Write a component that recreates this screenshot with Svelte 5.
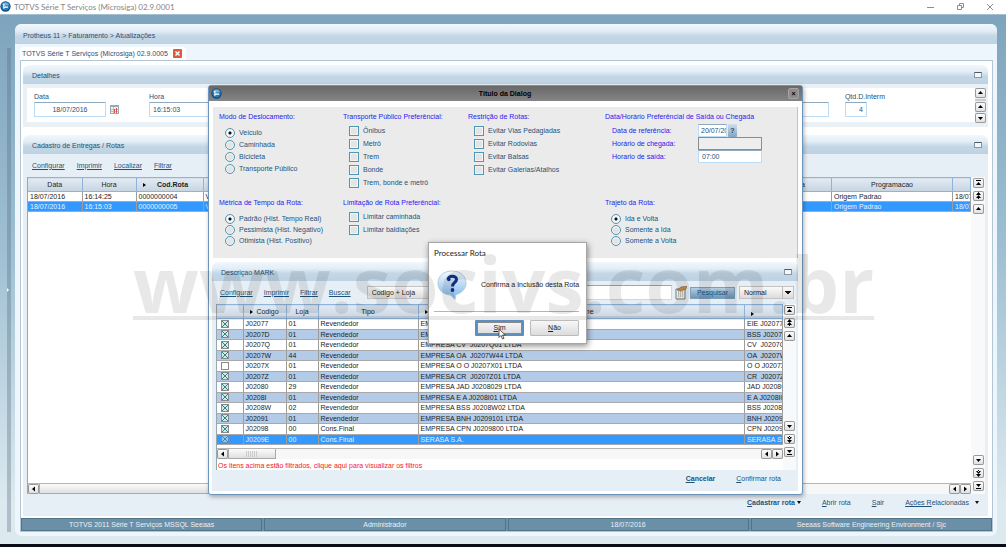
<script>
    let mode = $state("Veículo");
    let metric = $state("Padrão (Hist. Tempo Real)");
    let path = $state("Ida e Volta");
    let selected = $state(11);

    const modes = ["Veículo", "Caminhada", "Bicicleta", "Transporte Público"];
    const metrics = [
        "Padrão (Hist. Tempo Real)",
        "Pessimista (Hist. Negativo)",
        "Otimista (Hist. Positivo)",
    ];
    const paths = ["Ida e Volta", "Somente a Ida", "Somente a Volta"];
    const transports = ["Ônibus", "Metrô", "Trem", "Bonde", "Trem, bonde e metrô"];
    const restrictions = [
        "Evitar Vias Pedagiadas",
        "Evitar Rodovias",
        "Evitar Balsas",
        "Evitar Galerias/Atalhos",
    ];
    const limits = ["Limitar caminhada", "Limitar baldiações"];

    const routes = [
        { date: "18/07/2016", time: "16:14:25", code: "0000000004" },
        { date: "18/07/2016", time: "16:15:03", code: "0000000005" },
    ];

    let clients = $state([
        { on: true, code: "J02077", store: "01", type: "Revendedor", name: "EMPRESA EIE J0207701 LTDA", short: "EIE J0207701" },
        { on: true, code: "J0207D", store: "01", type: "Revendedor", name: "EMPRESA BSS J0207D01 LTDA", short: "BSS J0207D01" },
        { on: true, code: "J0207Q", store: "01", type: "Revendedor", name: "EMPRESA CV  J0207Q01 LTDA", short: "CV  J0207Q01" },
        { on: true, code: "J0207W", store: "44", type: "Revendedor", name: "EMPRESA OA  J0207W44 LTDA", short: "OA  J0207W44" },
        { on: false, code: "J0207X", store: "01", type: "Revendedor", name: "EMPRESA O O J0207X01 LTDA", short: "O O J0207X01" },
        { on: true, code: "J0207Z", store: "01", type: "Revendedor", name: "EMPRESA CR  J0207Z01 LTDA", short: "CR  J0207Z01" },
        { on: true, code: "J02080", store: "29", type: "Revendedor", name: "EMPRESA JAD J0208029 LTDA", short: "JAD J0208029" },
        { on: true, code: "J0208I", store: "01", type: "Revendedor", name: "EMPRESA E A J0208I01 LTDA", short: "E A J0208I01" },
        { on: true, code: "J0208W", store: "02", type: "Revendedor", name: "EMPRESA BSS J0208W02 LTDA", short: "BSS J0208W02" },
        { on: true, code: "J02091", store: "01", type: "Revendedor", name: "EMPRESA BNH J0209101 LTDA", short: "BNH J0209101" },
        { on: true, code: "J02098", store: "00", type: "Cons.Final", name: "EMPRESA CPN J0209800 LTDA", short: "CPN J0209800" },
        { on: true, code: "J0209E", store: "00", type: "Cons.Final", name: "SERASA S.A.", short: "SERASA S.A." },
    ]);

    const arrows = {
        first: "M3 2h5v1h-5z M5.500 4l2.500 3h-5z",
        pageup: "M5.500 1l2.500 3h-5z M5.500 4l2.500 3h-5z M5 6h1v2h-1z",
        up: "M5.500 3l2.500 3h-5z",
        down: "M5.500 7l2.500-3h-5z",
        pagedown: "M5.500 9l2.500-3h-5z M5.500 6l2.500-3h-5z M5 2h1v2h-1z",
        last: "M3 7h5v1h-5z M5.500 6l2.500-3h-5z",
        left: "M4 5l3-2.500v5z",
        right: "M7 5l-3-2.500v5z",
    };
</script>

{#snippet logo()}
    <svg class="logo" viewBox="0 0 12 12" aria-hidden="true">
        <circle cx="6" cy="6" r="5.6" fill="#0f4778" />
        <circle cx="6" cy="5.6" r="4.7" fill="#2679b4" />
        <path d="M2 4Q6 -0.5 10 4Q6 6 2 4z" fill="#74b2da" />
        <path d="M4.2 3v4.6l2.2-1.2M6.2 6.6h2.6" stroke="#fff" stroke-width="1.3" fill="none" />
    </svg>
{/snippet}

{#snippet arrow(kind)}
    <button type="button" class="arrow" aria-label={kind}>
        <svg viewBox="0 0 11 10"><path d={arrows[kind]} /></svg>
    </button>
{/snippet}

{#snippet scroller()}
    <div class="scroller">
        <div>{@render arrow("first")}{@render arrow("pageup")}{@render arrow("up")}</div>
        <div>{@render arrow("down")}{@render arrow("pagedown")}{@render arrow("last")}</div>
    </div>
{/snippet}

{#snippet collapse()}
    <button class="collapse" aria-label="Recolher"></button>
{/snippet}

<div class="screen">
    <header class="titlebar">
        {@render logo()}
        <span>TOTVS Série T Serviços (Microsiga) 02.9.0001</span>
        <svg class="controls" viewBox="0 0 70 10" aria-hidden="true">
            <path d="M0 5.500h7M30.500 3.500h4v4h-4zM32.500 3.500v-2h4v4h-2M60 2l6 6M66 2l-6 6" fill="none" stroke="#8d8d8d" />
        </svg>
    </header>

    <div class="desktop">
        <div class="splitter"><i></i></div>
        <main>
            <h1 class="bar top">Protheus 11 &gt; Faturamento &gt; Atualizações</h1>
            <div class="tabs">
                <div class="tab">
                    TOTVS Série T Serviços (Microsiga) 02.9.0005
                    <button class="tab-close" aria-label="Fechar">
                        <svg viewBox="0 0 9 9"><path d="M2.500 2.500l4 4M6.500 2.500l-4 4" stroke="#fff" stroke-width="1.400" /></svg>
                    </button>
                </div>
            </div>

            <div class="content">
                <section>
                    <h2 class="bar">Detalhes {@render collapse()}</h2>
                    <div class="details">
                        <div class="fields">
                            <label class="date">Data <input value="18/07/2016" /></label>
                            <svg class="calendar" viewBox="0 0 9 9" aria-hidden="true">
                                <rect width="9" height="9" fill="#9aa9b6" />
                                <path d="M1 2h7v6h-7z" fill="#f4f4f4" />
                                <path d="M1 4.500h7M1 6.500h7M3.500 2v6" stroke="#b9bec5" />
                                <path d="M4.500 4v4M6.500 3v5" stroke="#d4574c" />
                            </svg>
                            <label class="hour">Hora <input value="16:15:03" /></label>
                            <label class="qty">Qtd.D.Interm <input value="4" /></label>
                        </div>
                        <div class="mini-scroll">
                            {@render arrow("up")}<b></b>{@render arrow("up")}{@render arrow("down")}
                        </div>
                    </div>
                </section>

                <section class="grow">
                    <h2 class="bar">Cadastro de Entregas / Rotas {@render collapse()}</h2>
                    <div class="body">
                        <nav>
                            <a href="#configurar">Configurar</a>
                            <a href="#imprimir">Imprimir</a>
                            <a href="#localizar">Localizar</a>
                            <a href="#filtrar">Filtrar</a>
                        </nav>
                        <div class="list">
                            <div class="sheet">
                                <table class="routes">
                                    <thead>
                                        <tr>
                                            <th>Data</th>
                                            <th>Hora</th>
                                            <th class="sort bold">Cod.Rota</th>
                                            <th class="end">a</th>
                                            <th>Programacao</th>
                                            <th></th>
                                        </tr>
                                    </thead>
                                    <tbody>
                                        {#each routes as route, i}
                                            <tr class:selected={i === 1}>
                                                <td>{route.date}</td>
                                                <td>{route.time}</td>
                                                <td>{route.code}</td>
                                                <td>V</td>
                                                <td>Origem Padrao</td>
                                                <td>{route.date}</td>
                                            </tr>
                                        {/each}
                                    </tbody>
                                </table>
                                <div class="hscroll">
                                    {@render arrow("left")}
                                    <span class="thumb full"></span>
                                    {@render arrow("left")}{@render arrow("right")}
                                </div>
                            </div>
                            {@render scroller()}
                        </div>
                        <div class="actions">
                            <a class="bold menu" href="#cadastrar"><u>C</u>adastrar rota</a>
                            <a href="#abrir"><u>A</u>brir rota</a>
                            <a href="#sair"><u>S</u>air</a>
                            <a class="menu wide" href="#acoes"><u>Ações R</u>elacionadas</a>
                        </div>
                    </div>
                </section>

                <footer>
                    <span>TOTVS 2011 Série T Serviços MSSQL Seeaas</span>
                    <span>Administrador</span>
                    <span>18/07/2016</span>
                    <span>Seeaas Software Engineering Environment / Sjc</span>
                </footer>
            </div>
        </main>
    </div>

    <div class="dialog" role="dialog" aria-labelledby="dialog-title">
        <header>
            {@render logo()}
            <h2 id="dialog-title">Titulo da Dialog</h2>
            <button class="close" aria-label="Fechar">×</button>
        </header>

        <form class="options">
            <fieldset>
                <legend>Modo de Deslocamento:</legend>
                {#each modes as item}
                    <label class="radio"><input type="radio" value={item} bind:group={mode} />{item}</label>
                {/each}
            </fieldset>
            <fieldset>
                <legend>Transporte Público Preferêncial:</legend>
                {#each transports as item}
                    <label class="check"><input type="checkbox" />{item}</label>
                {/each}
            </fieldset>
            <fieldset>
                <legend>Restrição de Rotas:</legend>
                {#each restrictions as item}
                    <label class="check"><input type="checkbox" />{item}</label>
                {/each}
            </fieldset>
            <fieldset>
                <legend>Data/Horário Preferêncial de Saída ou Chegada</legend>
                <div class="when">
                    <label for="ref">Data de referência:</label>
                    <span class="ref">
                        <input id="ref" value="20/07/2016" />
                        <button type="button" class="help">?</button>
                    </span>
                    <label for="arrive">Horário de chegada:</label>
                    <input id="arrive" disabled />
                    <label for="leave">Horario de saída:</label>
                    <input id="leave" value="07:00" />
                </div>
            </fieldset>
            <fieldset class="tight">
                <legend>Métrica de Tempo da Rota:</legend>
                {#each metrics as item}
                    <label class="radio"><input type="radio" value={item} bind:group={metric} />{item}</label>
                {/each}
            </fieldset>
            <fieldset>
                <legend>Limitação de Rota Preferêncial:</legend>
                {#each limits as item}
                    <label class="check"><input type="checkbox" />{item}</label>
                {/each}
            </fieldset>
            <fieldset class="tight last">
                <legend>Trajeto da Rota:</legend>
                {#each paths as item}
                    <label class="radio"><input type="radio" value={item} bind:group={path} />{item}</label>
                {/each}
            </fieldset>
        </form>

        <section class="mark">
            <h2 class="bar">Descriçao MARK {@render collapse()}</h2>
            <div class="body">
                <div class="tools">
                    <nav>
                        <a href="#configurar">Configurar</a>
                        <a href="#imprimir">Imprimir</a>
                        <a href="#filtrar">Filtrar</a>
                        <a href="#buscar">Buscar</a>
                    </nav>
                    <select class="order" aria-label="Ordem"><option>Codigo + Loja</option></select>
                    <input class="search" aria-label="Pesquisa" />
                    <svg class="note" viewBox="0 0 12 14" aria-hidden="true">
                        <path d="M1 3h9v10h-9z" fill="#f3f3f0" stroke="#777" />
                        <path d="M3 6h5M3 8h5M3 10h5" stroke="#999" stroke-dasharray="1 1" />
                        <path d="M2 4l4-3 6-1-1 3-5 2z" fill="#c98f4b" stroke="#80592c" stroke-width="0.500" />
                    </svg>
                    <button class="primary">Pesquisar</button>
                    <select class="view" aria-label="Modo"><option>Normal</option></select>
                </div>
                <div class="list">
                    <div class="sheet">
                        <table class="clients">
                            <thead>
                                <tr>
                                    <th></th>
                                    <th class="sort">Codigo</th>
                                    <th>Loja</th>
                                    <th>Tipo</th>
                                    <th class="sort">Nome</th>
                                    <th class="sort"></th>
                                </tr>
                            </thead>
                            <tbody>
                                {#each clients as client, i}
                                    <tr class:selected={i === selected} onclick={() => (selected = i)}>
                                        <td><input type="checkbox" aria-label={client.code} bind:checked={client.on} /></td>
                                        <td>{client.code}</td>
                                        <td>{client.store}</td>
                                        <td>{client.type}</td>
                                        <td>{client.name}</td>
                                        <td>{client.short}</td>
                                    </tr>
                                {/each}
                            </tbody>
                        </table>
                        <div class="hscroll">
                            {@render arrow("left")}
                            <span class="thumb grip"></span>
                            {@render arrow("left")}{@render arrow("right")}
                        </div>
                        <p>Os itens acima estão filtrados, clique aqui para visualizar os filtros</p>
                    </div>
                    {@render scroller()}
                </div>
                <div class="actions">
                    <a class="bold" href="#cancelar"><u>Ca</u>ncelar</a>
                    <a href="#confirmar"><u>C</u>onfirmar rota</a>
                </div>
            </div>
        </section>
    </div>

    <div class="confirm" role="alertdialog" aria-labelledby="confirm-title">
        <h3 id="confirm-title">Processar Rota</h3>
        <div class="message">
            <svg viewBox="0 0 30 30" aria-hidden="true">
                <defs>
                    <linearGradient id="bubble" x2="0" y2="1">
                        <stop offset="0" stop-color="#f4fbff" />
                        <stop offset="1" stop-color="#7db4e8" />
                    </linearGradient>
                </defs>
                <path d="M15 1C23 1 29 6 29 13C29 19 24 23.500 19 24.500L18 29.500L13.500 25C6 24.500 1 20 1 13C1 6 7 1 15 1z" fill="url(#bubble)" stroke="#b5cbdf" />
                <path d="M11 9.500C11 5.500 19.500 5 19.500 9.500C19.500 12.500 15.500 12.500 15.500 16.500" fill="none" stroke="#12328c" stroke-width="3" />
                <circle cx="11.800" cy="9.500" r="1.800" fill="#12328c" />
                <circle cx="15.500" cy="20" r="1.900" fill="#12328c" />
            </svg>
            <span>Confirma a Inclusão desta Rota</span>
        </div>
        <div class="buttons">
            <button class="focus"><u>S</u>im</button>
            <button><u>N</u>ão</button>
        </div>
        <svg class="pointer" viewBox="0 0 8 12" aria-hidden="true">
            <path d="M1 1v8.500l2-2 1.500 3.500 1.500-.6-1.500-3.400h2.800z" fill="#fff" stroke="#333" stroke-width="0.800" />
        </svg>
    </div>

    <div class="watermark">www.socivs.com.br</div>
</div>

<style>
    :global(body) {
        background: #0a0d18;
    }

    * {
        box-sizing: border-box;
    }

    .screen {
        position: relative;
        display: flex;
        flex-direction: column;
        min-height: 100vh;
        overflow: hidden;
        border-bottom: 3px solid #0a0d18;
        color: #1f5278;
        font: 7px/10px "Liberation Sans", Arial, sans-serif;
    }

    h1,
    h2,
    h3,
    p {
        margin: 0;
        font-size: inherit;
        font-weight: normal;
    }

    button,
    input,
    select {
        margin: 0;
        padding: 0;
        border: 0;
        border-radius: 0;
        color: inherit;
        font: inherit;
        appearance: none;
    }

    a {
        color: inherit;
        text-decoration: none;
    }

    svg {
        display: block;
        flex: none;
    }

    .bold {
        font-weight: bold;
    }

    .logo {
        width: 11px;
        height: 11px;
    }

    .titlebar {
        display: flex;
        align-items: center;
        gap: 3px;
        height: 15px;
        padding: 0 9px 1px 0;
        background: #fff;
        border-bottom: 1px solid #a5c0d1;
        color: #858585;
        font-family: Lato, sans-serif;
        font-size: 8px;
    }

    .controls {
        width: 70px;
        height: 10px;
        margin-left: auto;
    }

    .desktop {
        display: flex;
        flex: 1;
        padding: 9px 9px 8px 7px;
        background: linear-gradient(#7ea4bd, #9fc0d3 45%, #dce9ef 92%);
    }

    .splitter {
        display: flex;
        align-items: center;
        width: 4px;
        margin: 24px 4px 4px 0;
        background: rgba(90, 110, 125, 0.35);
    }

    .splitter i {
        border: 2px solid transparent;
        border-left-color: #fff;
    }

    main {
        display: flex;
        flex: 1;
        flex-direction: column;
        min-width: 0;
        padding-bottom: 4px;
        background: #edf6fd;
        border-radius: 7px;
    }

    .bar {
        display: flex;
        align-items: center;
        justify-content: space-between;
        height: 19px;
        padding: 3px 6px 0 9px;
        background: linear-gradient(#f1f8fd, #e2edf6 35%, #c4d7e6 60%, #bdd2e3);
        border-radius: 6px 6px 0 0;
    }

    .bar.top {
        height: 20px;
        padding-left: 8px;
    }

    .collapse {
        width: 8px;
        height: 6px;
        margin-bottom: 2px;
        background: #f4f6f8;
        border: 1px solid #8996a1;
        border-top-color: #4e5a65;
        border-radius: 1px;
    }

    .tabs {
        display: flex;
        height: 16px;
        padding: 3px 5px 0;
    }

    .tab {
        display: flex;
        align-items: center;
        gap: 5px;
        padding: 0 4px 0 2px;
        background: #fff;
        border-radius: 4px 4px 0 0;
    }

    .tab-close {
        width: 9px;
        height: 9px;
        background: #dd5b3b;
        border-radius: 1px;
    }

    .content {
        display: flex;
        flex: 1;
        flex-direction: column;
        margin: 0 4px 0 5px;
        background: #fff;
        border: 1px solid #b4c6d4;
    }

    section {
        margin: 4px 4px 4px 2px;
    }

    .details {
        display: flex;
        padding: 4px 2px 4px 4px;
        background: #e9f0f6;
    }

    .fields {
        display: flex;
        flex: 1;
        height: 34px;
        padding: 4px 8px 0 7px;
        background: #fff;
    }

    .fields label {
        display: flex;
        flex-direction: column;
    }

    .fields input,
    .when input,
    .search {
        height: 15px;
        padding: 0 3px;
        background: #fff;
        border: 1px solid #bcdcf7;
        border-top-color: #8fa9bf;
    }

    .date input {
        width: 72px;
        text-align: center;
    }

    .calendar {
        width: 9px;
        height: 9px;
        margin: 13px 30px 0 4px;
    }

    .hour {
        flex: 1;
        margin-right: 16px;
    }

    .qty {
        margin-right: 82px;
    }

    .qty input {
        width: 22px;
        text-align: right;
    }

    .mini-scroll {
        display: flex;
        flex-direction: column;
        gap: 1px;
    }

    .mini-scroll b {
        height: 2px;
        background: #ccc;
    }

    .arrow {
        flex: none;
        width: 11px;
        height: 10px;
        background: linear-gradient(#fff, #dedede);
        border-radius: 2px;
        box-shadow: inset 0 0 0 1px #999;
    }

    .grow,
    .body {
        display: flex;
        flex: 1;
        flex-direction: column;
    }

    .grow {
        margin-bottom: 2px;
    }

    .body {
        padding: 0 3px 0 4px;
        background: #e7eff6;
    }

    nav {
        display: flex;
        align-items: center;
        gap: 12px;
        height: 23px;
        padding-left: 5px;
    }

    nav a {
        text-decoration: underline;
    }

    .list {
        display: flex;
        flex: 1;
        background: #fff;
    }

    .sheet {
        display: flex;
        flex: 1;
        flex-direction: column;
        min-width: 0;
        border-left: 1px solid #9aa5ae;
    }

    .scroller {
        display: flex;
        flex-direction: column;
        justify-content: space-between;
        padding: 1px 1px 3px 2px;
        background: #f8f9fb;
    }

    .scroller div {
        display: grid;
        gap: 3px;
    }

    table {
        width: 100%;
        border-collapse: collapse;
        table-layout: fixed;
        color: #1d1d1d;
    }

    th {
        height: 14px;
        padding: 0 3px;
        background: linear-gradient(#e2ebf4, #c6d4e1);
        border: 1px solid #8fb4dc;
        border-left-width: 0;
        font-weight: normal;
        line-height: 12px;
        text-align: center;
    }

    th.bold {
        font-weight: bold;
    }

    th.end {
        padding-right: 26px;
        text-align: right;
    }

    .sort::before {
        content: "";
        float: left;
        margin: 4px 0 0 3px;
        border: 2px solid transparent;
        border-left: 3px solid #000;
        border-right: 0;
    }

    td {
        height: 10px;
        padding: 0 2px;
        overflow: hidden;
        border-right: 1px solid #9c9c9c;
        border-bottom: 1px solid #a9a9a9;
        line-height: 9px;
        white-space: pre;
    }

    .selected td {
        background: #3399ff;
        color: #e6f2ff;
    }

    .routes th:nth-child(-n + 2) {
        width: 54px;
    }

    .routes th:nth-child(3) {
        width: 67px;
    }

    .routes th:nth-child(5) {
        width: 121px;
    }

    .routes th:nth-child(6) {
        width: 18px;
    }

    .hscroll {
        display: flex;
        height: 11px;
        margin-top: auto;
        background: #f7f7f7;
        border-top: 1px solid #b4b4b4;
    }

    .thumb {
        margin-right: auto;
        background: linear-gradient(#fbfbfb, #dfdfdf);
        border: 1px solid #aaa;
        border-width: 0 1px 1px;
    }

    .full {
        width: 65%;
    }

    .grip {
        display: flex;
        align-items: center;
        justify-content: center;
        width: 48px;
    }

    .grip::before {
        content: "";
        width: 12px;
        height: 6px;
        background: repeating-linear-gradient(90deg, #ccc 0 1px, transparent 1px 2px);
    }

    .actions {
        display: flex;
        align-items: center;
        justify-content: flex-end;
        gap: 21px;
        height: 22px;
        padding: 0 6px 4px 0;
    }

    .menu::after {
        content: "";
        display: inline-block;
        margin: 0 0 1px 2px;
        border: 2px solid transparent;
        border-top: 3px solid #111;
        border-bottom: 0;
    }

    .wide::after {
        margin-left: 6px;
    }

    footer {
        display: grid;
        grid-template-columns: repeat(4, 1fr);
        gap: 2px;
        background: #6b8fa6;
    }

    footer span {
        height: 13px;
        border: 1px solid #4f7389;
        color: #e9f1f6;
        line-height: 11px;
        text-align: center;
    }

    .dialog {
        position: absolute;
        top: 85px;
        left: 208px;
        width: 595px;
        padding-bottom: 3px;
        background: #fff;
        border: 1px solid #6d94ba;
        border-radius: 3px;
        box-shadow: 1px 2px 4px rgba(0, 0, 0, 0.3);
    }

    .dialog header {
        display: flex;
        align-items: center;
        justify-content: space-between;
        height: 15px;
        padding: 0 3px 0 2px;
        background: linear-gradient(#686868, #858585);
        color: #000;
    }

    .dialog header h2 {
        font-weight: bold;
    }

    .close {
        width: 11px;
        height: 11px;
        background: #8d8d8d;
        border: 1px solid #a5a5a5;
        border-radius: 2px;
        font-weight: bold;
        line-height: 8px;
    }

    .options {
        display: grid;
        grid-template-columns: 124px 125px 137px 1fr;
        grid-template-rows: 77px auto;
        row-gap: 9px;
        height: 151px;
        margin: 6px 4px 4px;
        padding: 5px 6px 0;
        background: #ebebeb;
        border-right: 1px solid #c3c3c3;
    }

    fieldset {
        min-width: 0;
        margin: 0;
        padding: 0;
        border: 0;
    }

    legend {
        padding: 0;
        color: #2a20ee;
        white-space: nowrap;
    }

    .last {
        grid-column: 4;
    }

    .radio,
    .check {
        display: flex;
        align-items: center;
        gap: 4px;
        padding-left: 6px;
    }

    .radio {
        height: 12px;
    }

    .tight .radio {
        height: 11px;
    }

    legend + .radio {
        margin-top: 5px;
    }

    legend + .check {
        margin-top: 2px;
    }

    .check {
        height: 13px;
    }

    .radio input,
    .check input {
        width: 10px;
        height: 10px;
        background: #e4e4e4;
        border: 1px solid #5296b3;
        box-shadow: inset 0 0 0 1px #f3f3f3;
    }

    .radio input {
        border-radius: 50%;
    }

    .radio input:checked {
        background: radial-gradient(#111 0 1px, #f6f6f6 2px);
    }

    .when {
        display: grid;
        grid-template-columns: 86px 64px;
        grid-auto-rows: 13px;
        align-items: center;
        margin-top: 2px;
        padding-left: 7px;
        color: #2a20ee;
    }

    .when input {
        width: 100%;
        height: 13px;
        color: #1f5278;
    }

    .ref {
        display: flex;
        gap: 1px;
    }

    .ref input {
        width: 29px;
        padding: 0 0 0 2px;
    }

    .help {
        width: 9px;
        height: 13px;
        background: linear-gradient(#cfdeeb, #83a4c0);
        border-radius: 1px;
        color: #1d4668;
        font-weight: bold;
    }

    .when input:disabled {
        background: #eee;
        border-color: #8c8c8c;
    }

    .mark {
        margin: 0 4px 0 3px;
    }

    .mark .body {
        padding: 0 2px 3px 4px;
    }

    .tools {
        display: flex;
        align-items: center;
        height: 23px;
        padding-right: 2px;
    }

    .tools nav {
        gap: 11px;
        padding-left: 4px;
    }

    select {
        height: 13px;
        padding-left: 4px;
        background: linear-gradient(#fafafa, #dcdcdc);
        border: 1px solid #c3c3c3;
        color: #222;
    }

    .order {
        width: 80px;
        margin-left: 16px;
    }

    .search {
        flex: 1;
        min-width: 0;
    }

    .note {
        width: 12px;
        height: 14px;
        margin: 0 3px;
    }

    .primary {
        width: 45px;
        height: 12px;
        margin-right: 4px;
        background: linear-gradient(#b5cde0, #6d97b7);
        border: 1px solid #7d9fba;
        color: #14507f;
    }

    .view {
        width: 55px;
        background:
            linear-gradient(#bbb, #bbb) right 10px center / 1px 13px no-repeat,
            conic-gradient(from -45deg at 50% 100%, #111 90deg, transparent 0) right 2px center / 6px 3px no-repeat,
            linear-gradient(#fafafa, #dcdcdc);
    }

    .clients {
        height: 141px;
    }

    .clients th:nth-child(1) {
        width: 26px;
    }

    .clients th:nth-child(2) {
        width: 43px;
    }

    .clients th:nth-child(3) {
        width: 32px;
    }

    .clients th:nth-child(4) {
        width: 100px;
    }

    .clients th:nth-child(6) {
        width: 38px;
    }

    .clients tr:nth-child(even):not(.selected) td {
        background: #b3cbe7;
    }

    .clients td input {
        display: block;
        width: 8px;
        height: 8px;
        margin-left: 2px;
        background: #fff;
        border: 1px solid #8a8a8a;
    }

    .clients td input:checked {
        background:
            linear-gradient(45deg, transparent 42%, #2c8583 42% 58%, transparent 58%),
            linear-gradient(-45deg, #d5e7e6 42%, #2c8583 42% 58%, #d5e7e6 58%);
    }

    .clients .selected td input {
        opacity: 0.6;
    }

    .mark .hscroll {
        margin-top: 3px;
    }

    .sheet p {
        height: 11px;
        padding: 2px 1px 0;
        color: #f5201c;
        white-space: nowrap;
    }

    .mark .scroller {
        padding: 1px 1px 13px;
    }

    .mark .actions {
        height: 18px;
        padding: 0 15px 0 0;
    }

    .confirm {
        position: absolute;
        top: 242px;
        left: 428px;
        width: 159px;
        height: 102px;
        padding: 5px 7px 7px 5px;
        background: #fff;
        border: 1px solid #a6a6a6;
        box-shadow: 1px 2px 6px rgba(0, 0, 0, 0.45);
        color: #1c1c1c;
    }

    .confirm h3 {
        font-family: Lato, sans-serif;
        font-size: 8px;
    }

    .message {
        display: flex;
        align-items: center;
        gap: 14px;
        height: 54px;
        padding-left: 3px;
        border-bottom: 1px solid #b5b5b5;
        white-space: nowrap;
    }

    .message svg {
        width: 30px;
        height: 30px;
    }

    .buttons {
        display: flex;
        justify-content: flex-end;
        gap: 6px;
        margin-top: 8px;
    }

    .buttons button {
        width: 49px;
        height: 16px;
        background: linear-gradient(#f7f7f7, #dcdcdc);
        border: 1px solid #bbb;
        border-radius: 1px;
    }

    .buttons .focus {
        border: 2px solid #5c8fc0;
        outline: 1px solid #8a8a8a;
        outline-offset: -3px;
        line-height: 8px;
    }

    .pointer {
        position: absolute;
        top: 85px;
        left: 69px;
        width: 8px;
        height: 12px;
    }

    .watermark {
        position: absolute;
        top: 230px;
        left: 133px;
        color: rgba(0, 0, 0, 0.09);
        font: bold 77px/108px "Open Sans", sans-serif;
        text-decoration: underline 4px;
        text-decoration-skip-ink: none;
        text-underline-offset: 3px;
        pointer-events: none;
    }
</style>
